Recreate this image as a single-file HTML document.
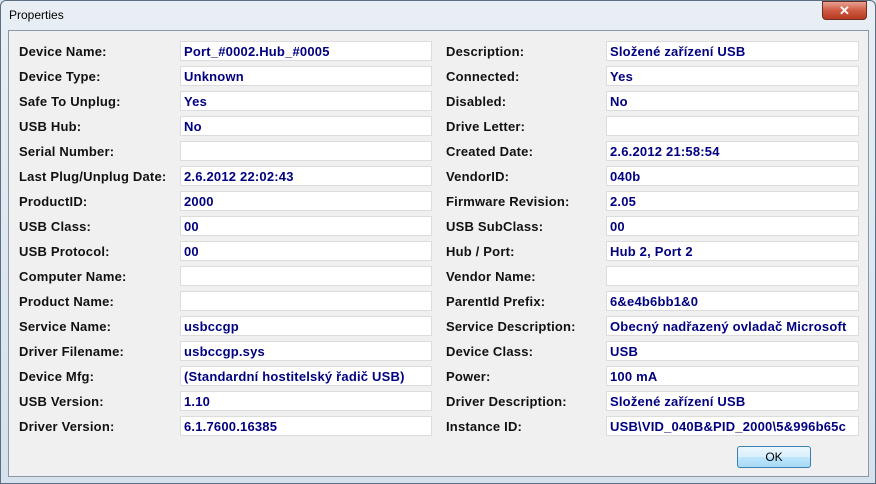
<!DOCTYPE html>
<html><head><meta charset="utf-8"><style>
*{margin:0;padding:0;box-sizing:border-box}
body{width:876px;height:484px;overflow:hidden;background:#d9e4ee;font-family:"Liberation Sans",sans-serif;position:relative}
.frame{position:absolute;left:0;top:0;width:876px;height:484px;border:1px solid #5a6f84;border-radius:6px 6px 0 0;background:linear-gradient(#e8eef4,#d5e1ec)}
.title{position:absolute;left:9px;top:8px;font-size:12px;color:#000}
.close{position:absolute;left:822px;top:1px;width:45px;height:19px;border:1px solid #6d2d22;border-radius:0 0 4px 4px;background:linear-gradient(#e8a193,#cf5a42 50%,#b83a22);color:#fff;font:bold 13px "Liberation Sans",sans-serif;text-align:center;line-height:17px}
.panel{position:absolute;left:8px;top:30px;width:861px;height:447px;background:#f0f0f0;border:1px solid #8a99a8}
.l{position:absolute;font:bold 13px "Liberation Sans",sans-serif;letter-spacing:0.2px;color:#111;height:20px;line-height:21px}
.v{position:absolute;height:20px;background:#fff;border:1px solid #dcdcdc;font:bold 13px "Liberation Sans",sans-serif;letter-spacing:0.2px;color:#000080;line-height:19px;padding-left:3px;white-space:nowrap;overflow:hidden}
.ok{position:absolute;left:737px;top:446px;width:74px;height:22px;border:1px solid #3c7fb1;border-radius:3px;background:linear-gradient(#eaf6fd,#d9f0fc 50%,#bee6fd 51%,#a7d9f5);font:12px "Liberation Sans",sans-serif;text-align:center;line-height:20px}
</style></head><body>
<div class="frame"></div>
<div class="title">Properties</div>
<div class="close">✕</div>
<div class="panel"></div>
<div id="c"></div>
<div class="ok">OK</div>
<script>
var L=[["Device Name:","Port_#0002.Hub_#0005","Description:","Složené zařízení USB"],
["Device Type:","Unknown","Connected:","Yes"],
["Safe To Unplug:","Yes","Disabled:","No"],
["USB Hub:","No","Drive Letter:",""],
["Serial Number:","","Created Date:","2.6.2012 21:58:54"],
["Last Plug/Unplug Date:","2.6.2012 22:02:43","VendorID:","040b"],
["ProductID:","2000","Firmware Revision:","2.05"],
["USB Class:","00","USB SubClass:","00"],
["USB Protocol:","00","Hub / Port:","Hub 2, Port 2"],
["Computer Name:","","Vendor Name:",""],
["Product Name:","","ParentId Prefix:","6&e4b6bb1&0"],
["Service Name:","usbccgp","Service Description:","Obecný nadřazený ovladač Microsoft"],
["Driver Filename:","usbccgp.sys","Device Class:","USB"],
["Device Mfg:","(Standardní hostitelský řadič USB)","Power:","100 mA"],
["USB Version:","1.10","Driver Description:","Složené zařízení USB"],
["Driver Version:","6.1.7600.16385","Instance ID:","USB\\VID_040B&PID_2000\\5&996b65c"]];
var h="";
L.forEach(function(r,i){var y=41+i*25;
h+='<div class="l" style="left:19px;top:'+y+'px">'+r[0]+'</div>';
h+='<div class="v" style="left:180px;top:'+y+'px;width:252px">'+r[1]+'</div>';
h+='<div class="l" style="left:446px;top:'+y+'px">'+r[2]+'</div>';
h+='<div class="v" style="left:606px;top:'+y+'px;width:253px">'+r[3]+'</div>';});
document.getElementById("c").innerHTML=h;
</script>
</body></html>
